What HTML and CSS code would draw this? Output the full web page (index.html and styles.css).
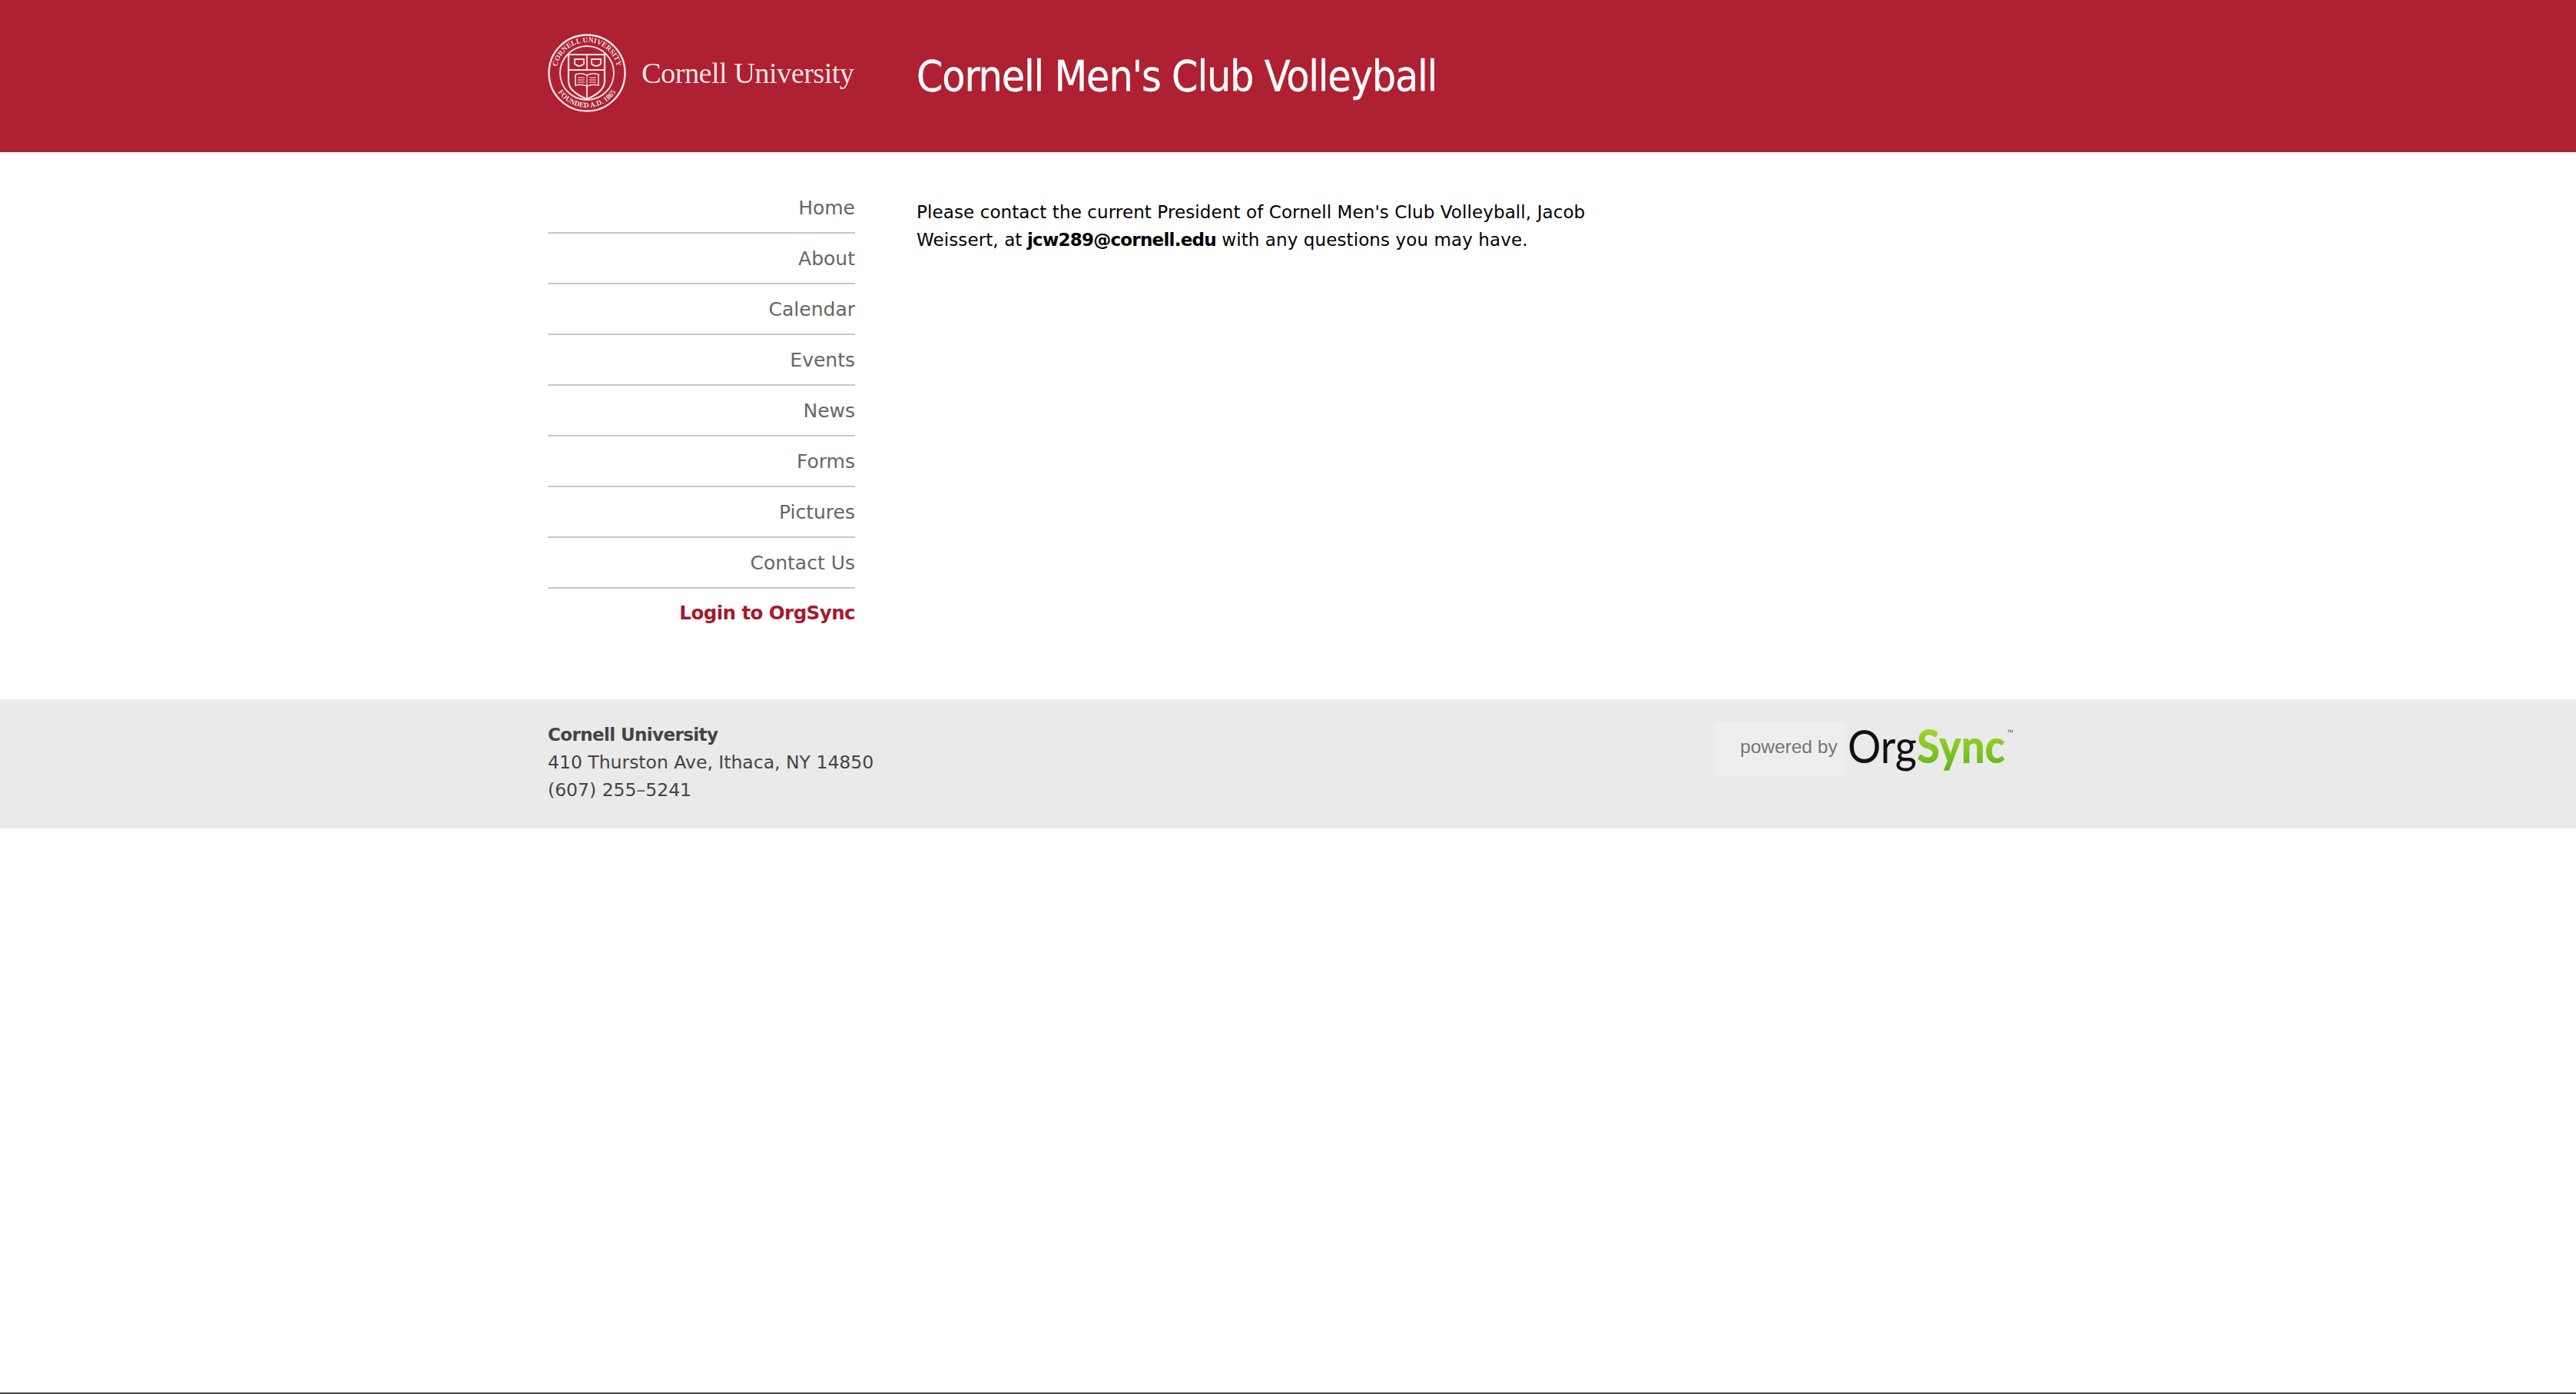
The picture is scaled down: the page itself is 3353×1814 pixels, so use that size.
FILE: index.html
```html
<!DOCTYPE html>
<html lang="en">
<head>
<meta charset="utf-8">
<title>Cornell Men's Club Volleyball</title>
<link rel="stylesheet" href="styles.css">
</head>
<body>
<header class="masthead">
  <div class="wrap">
    <div class="brand">
      <svg class="seal" viewBox="0 0 102 102" width="102" height="102" aria-hidden="true">
        <defs>
          <path id="arcTop" d="M11 51a40 40 0 0 1 80 0"/>
          <path id="arcBottom" d="M6 51a45 45 0 0 0 90 0"/>
        </defs>
        <g fill="none" stroke="#f6e4e6">
          <circle cx="51" cy="51" r="49.5" stroke-width="2.4"/>
          <circle cx="51" cy="51" r="35" stroke-width="1.8"/>
          <path d="M27 27H74V62Q74 75 51 85Q27 75 27 62Z" stroke-width="2.2"/>
          <path d="M27 47H74M51 27V47M51 68V85" stroke-width="1.8"/>
          <path d="M35 33h12v6q-6 6-12 0zM57 33h12v6q-6 6-12 0z" stroke-width="1.8"/>
          <path d="M36 53q8-3 15 1q7-4 15-1V67q-8-2-15 1q-7-3-15-1Z" stroke-width="1.6"/>
          <path d="M39 57h9M39 60h9M39 63h9M54 57h9M54 60h9M54 63h9M51 54v14" stroke-width="1.1"/>
        </g>
        <g class="seal-text">
          <text><textPath href="#arcTop" startOffset="50%" text-anchor="middle">CORNELL UNIVERSITY</textPath></text>
          <text><textPath href="#arcBottom" startOffset="50%" text-anchor="middle">FOUNDED A.D. 1865</textPath></text>
        </g>
      </svg>
      <span class="wordmark">Cornell University</span>
    </div>
    <h1 class="site-title">Cornell Men's Club Volleyball</h1>
  </div>
</header>

<div class="wrap page">
  <nav class="side-nav">
    <a href="#">Home</a>
    <a href="#">About</a>
    <a href="#">Calendar</a>
    <a href="#">Events</a>
    <a href="#">News</a>
    <a href="#">Forms</a>
    <a href="#">Pictures</a>
    <a href="#">Contact Us</a>
    <a href="#" class="login">Login to OrgSync</a>
  </nav>
  <main class="content">
    <p>Please contact the current President of Cornell Men's Club Volleyball, Jacob Weissert, at <strong>jcw289@cornell.edu</strong> with any questions you may have.</p>
  </main>
</div>

<footer class="site-footer">
  <div class="wrap footer-row">
    <address class="address">
      <strong>Cornell University</strong><br>
      410 Thurston Ave, Ithaca, NY 14850<br>
      (607) 255–5241
    </address>
    <div class="powered">
      <span class="powered-by">powered by</span>
      <svg class="orgsync" viewBox="0 -12 230 100" width="230" height="100" role="img" aria-label="OrgSync">
        <defs>
          <linearGradient id="syncGreen" x1="0" y1="0" x2="0" y2="1">
            <stop offset="0" stop-color="#b4dc32"/>
            <stop offset="1" stop-color="#5cb515"/>
          </linearGradient>
        </defs>
        <text class="org" x="2" y="53" textLength="90" lengthAdjust="spacingAndGlyphs">Org</text>
        <text class="sync" x="92" y="53" textLength="115" lengthAdjust="spacingAndGlyphs" fill="url(#syncGreen)">Sync</text>
        <text class="tm" x="209" y="16">™</text>
      </svg>
    </div>
  </div>
</footer>
<div class="page-rule"></div>
</body>
</html>
```
FILE: styles.css
```css
* { box-sizing: border-box; }
html, body { height: 100%; }
body {
  margin: 0;
  display: flex;
  flex-direction: column;
  background: #fff;
  color: #000;
  font-family: "DejaVu Sans", Verdana, sans-serif;
  font-size: 24px;
  line-height: 36px;
}
.wrap {
  width: 1927px;
  margin-left: 713px;
  display: flex;
}
.masthead { background: #ae2132; height: 198px; flex: none; }
.masthead .wrap { height: 100%; }
.brand {
  width: 400px;
  margin-right: 80px;
  display: flex;
  align-items: center;
  gap: 20px;
  height: 190px;
  color: #f6e4e6;
}
.seal { flex: none; filter: blur(0.5px); }
.seal-text text {
  font-family: "Liberation Serif", serif;
  font-size: 9.5px;
  font-weight: 700;
  fill: #f6e4e6;
}
.wordmark {
  font-family: "Liberation Serif", serif;
  font-size: 38.5px;
  letter-spacing: -0.62px;
  white-space: nowrap;
  filter: blur(0.5px);
}
.site-title {
  margin: 0;
  padding-top: 63px;
  font-weight: 400;
  font-size: 55px;
  font-stretch: condensed;
  line-height: 72px;
  letter-spacing: -1.2px;
  -webkit-text-stroke: 0.3px #fff;
  color: #fff;
  white-space: nowrap;
}
.page { flex: none; }
.side-nav {
  width: 400px;
  margin-right: 80px;
  padding: 40px 0 80px;
  display: flex;
  flex-direction: column;
}
.side-nav a {
  height: 66px;
  padding-top: 15px;
  border-bottom: 2px solid #c8c8c8;
  text-align: right;
  font-size: 25px;
  color: #666;
  text-decoration: none;
}
.side-nav a:last-child { height: 64px; border-bottom: 0; }
.side-nav .login { color: #a6192e; font-weight: 700; font-size: 24.5px; letter-spacing: -0.55px; padding-top: 14px; }
.content { width: 900px; padding-top: 60px; font-size: 23px; letter-spacing: 0.1px; }
.content p { margin: 0; }
.content strong { font-size: 23px; letter-spacing: -0.75px; margin-left: -1px; }
.site-footer { background: #eaeaea; height: 168px; flex: none; }
.footer-row { justify-content: space-between; }
.address {
  font-style: normal;
  font-size: 23.5px;
  color: #444;
  padding-top: 28px;
  white-space: nowrap;
}
.address strong { font-size: 23px; letter-spacing: -0.6px; }
.powered {
  display: flex;
  align-items: flex-start;
  margin-top: 30px;
  margin-right: 7px;
  filter: blur(0.4px);
}
.powered-by {
  width: 168px;
  height: 70px;
  margin-right: 2px;
  padding: 14px 0 0 32px;
  background: #eeeeee;
  color: #757575;
  font-family: "Liberation Sans", Arial, sans-serif;
  font-size: 24.5px;
  line-height: 36px;
  white-space: nowrap;
}
.orgsync { margin-top: -12px; }
.org { font-family: "Lato", sans-serif; font-weight: 400; font-size: 60px; fill: #111; }
.sync { font-family: "Lato", sans-serif; font-size: 60px; font-weight: 900; }
.tm { font-family: "Liberation Sans", sans-serif; font-size: 9px; fill: #555; }
.page-rule { margin-top: auto; height: 2px; background: #444; flex: none; }
```
